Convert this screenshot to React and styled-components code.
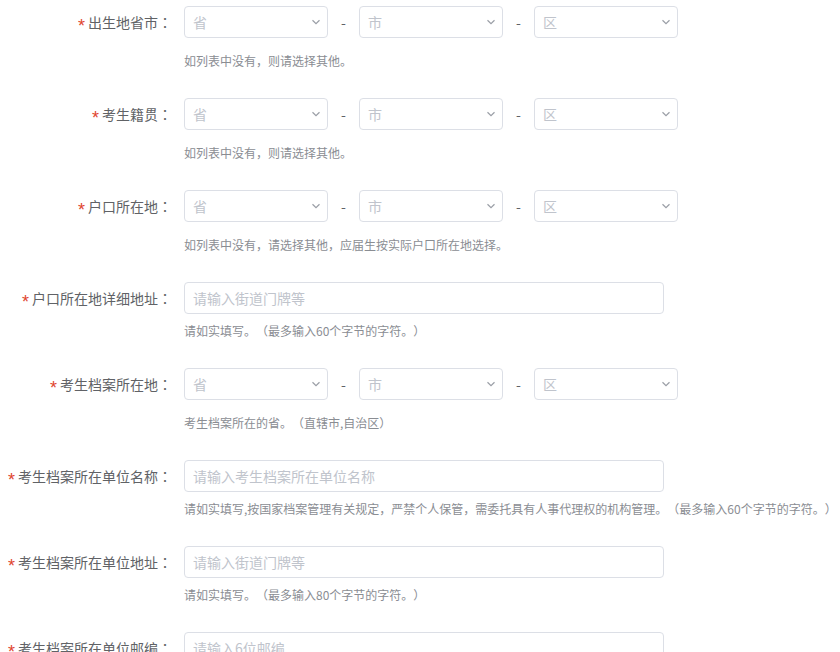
import styled, { createGlobalStyle } from "styled-components";

const GlobalStyle = createGlobalStyle`
  body {
    margin: 0;
    background: #fff;
    font-family: "Microsoft YaHei", "Noto Sans CJK SC", "Liberation Sans", sans-serif;
    text-spacing-trim: space-all;
  }
`;

const fields = [
  { label: "出生地省市", type: "region", hint: "如列表中没有，则请选择其他。" },
  { label: "考生籍贯", type: "region", hint: "如列表中没有，则请选择其他。" },
  { label: "户口所在地", type: "region", hint: "如列表中没有，请选择其他，应届生按实际户口所在地选择。" },
  { label: "户口所在地详细地址", type: "input", placeholder: "请输入街道门牌等", hint: "请如实填写。（最多输入60个字节的字符。）" },
  { label: "考生档案所在地", type: "region", hint: "考生档案所在的省。（直辖市,自治区）" },
  {
    label: "考生档案所在单位名称",
    type: "input",
    placeholder: "请输入考生档案所在单位名称",
    hint: "请如实填写,按国家档案管理有关规定，严禁个人保管，需委托具有人事代理权的机构管理。（最多输入60个字节的字符。）",
  },
  { label: "考生档案所在单位地址", type: "input", placeholder: "请输入街道门牌等", hint: "请如实填写。（最多输入80个字节的字符。）" },
  { label: "考生档案所在单位邮编", type: "input", placeholder: "请输入6位邮编", hint: "" },
];

const Arrow = () => (
  <svg width="10" height="10" viewBox="0 0 10 10" fill="none">
    <path d="M1.5 3.2 L5 6.6 L8.5 3.2" stroke="#9a9ea6" strokeWidth="1.2" />
  </svg>
);

const Select = ({ placeholder }) => (
  <SelectBox>
    <Placeholder>{placeholder}</Placeholder>
    <Arrow />
  </SelectBox>
);

const App = () => {
  return (
    <>
      <GlobalStyle />
      <Form>
        {fields.map((f) => (
          <Item key={f.label}>
            <Label>
              <Star>*</Star>
              {f.label}
              <Colon>：</Colon>
            </Label>
            <Content>
              {f.type === "region" ? (
                <RegionRow>
                  <Select placeholder="省" />
                  <Dash>-</Dash>
                  <Select placeholder="市" />
                  <Dash>-</Dash>
                  <Select placeholder="区" />
                </RegionRow>
              ) : (
                <Input placeholder={f.placeholder} />
              )}
              {f.hint && <Hint>{f.hint}</Hint>}
            </Content>
          </Item>
        ))}
      </Form>
    </>
  );
};

const Form = styled.div`
  padding-top: 6px;
  display: flex;
  flex-direction: column;
  gap: 28px;
`;

const Item = styled.div`
  display: grid;
  grid-template-columns: 184px auto;
`;

const Label = styled.div`
  box-sizing: border-box;
  padding-right: 12px;
  text-align: right;
  height: 32px;
  line-height: 32px;
  font-size: 14px;
  color: #606266;
  white-space: nowrap;
`;

const Colon = styled.span`
  font-family: "Noto Sans CJK TC", sans-serif;
`;

const Star = styled.span`
  font-family: "Liberation Sans", sans-serif;
  font-size: 18px;
  vertical-align: -4px;
  color: #e0452f;
  margin-right: 3px;
`;

const Content = styled.div`
  display: flex;
  flex-direction: column;
`;

const RegionRow = styled.div`
  display: flex;
  align-items: center;
  margin-bottom: 6px;
`;

const SelectBox = styled.div`
  box-sizing: border-box;
  width: 144px;
  height: 32px;
  border: 1px solid #dcdfe6;
  border-radius: 4px;
  display: flex;
  align-items: center;
  justify-content: space-between;
  padding: 0 6px 0 8px;
`;

const Placeholder = styled.span`
  font-size: 14px;
  color: #c0c4cc;
`;

const Dash = styled.span`
  width: 31px;
  text-align: center;
  font-size: 14px;
  color: #606266;
`;

const Input = styled.input`
  box-sizing: border-box;
  width: 480px;
  height: 32px;
  border: 1px solid #dcdfe6;
  border-radius: 4px;
  padding: 0 8px;
  font-size: 14px;
  font-family: inherit;
  outline: none;
  &::placeholder {
    color: #c0c4cc;
  }
`;

const Hint = styled.div`
  margin-top: 8px;
  font-size: 12px;
  line-height: 18px;
  color: #8a8d93;
  white-space: nowrap;
`;

export default App;
